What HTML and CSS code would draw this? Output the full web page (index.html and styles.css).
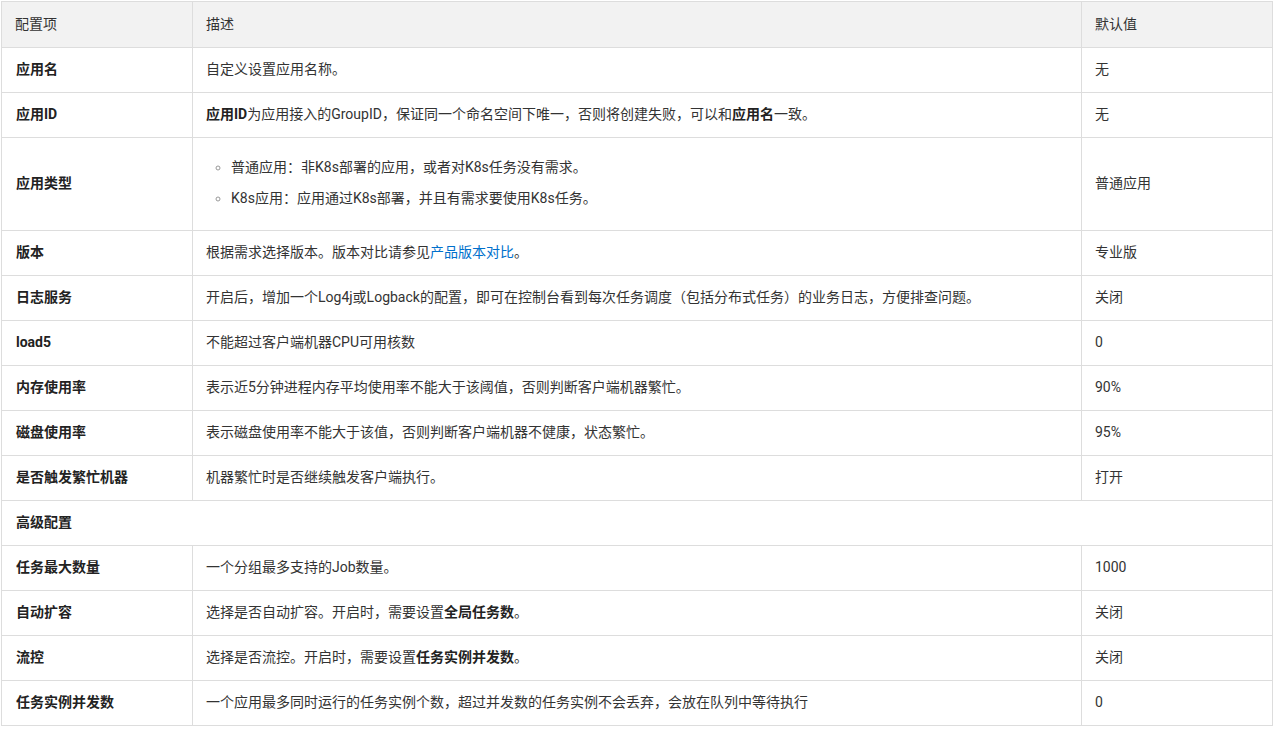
FILE: index.html
```html
<!DOCTYPE html>
<html lang="zh-CN">
<head>
<meta charset="utf-8">
<title>配置项</title>
<link rel="stylesheet" href="styles.css">
</head>
<body>
<table class="cfg">
  <colgroup>
    <col class="c1"><col class="c2"><col class="c3">
  </colgroup>
  <thead>
    <tr><th>配置项</th><th>描述</th><th>默认值</th></tr>
  </thead>
  <tbody>
    <tr><td class="k">应用名</td><td>自定义设置应用名称。</td><td>无</td></tr>
    <tr><td class="k">应用ID</td><td><b>应用ID</b>为应用接入的GroupID，保证同一个命名空间下唯一，否则将创建失败，可以和<b>应用名</b>一致。</td><td>无</td></tr>
    <tr><td class="k">应用类型</td><td><ul class="list"><li>普通应用：非K8s部署的应用，或者对K8s任务没有需求。</li><li>K8s应用：应用通过K8s部署，并且有需求要使用K8s任务。</li></ul></td><td>普通应用</td></tr>
    <tr><td class="k">版本</td><td>根据需求选择版本。版本对比请参见<a class="link" href="#">产品版本对比</a>。</td><td>专业版</td></tr>
    <tr><td class="k">日志服务</td><td>开启后，增加一个Log4j或Logback的配置，即可在控制台看到每次任务调度（包括分布式任务）的业务日志，方便排查问题。</td><td>关闭</td></tr>
    <tr><td class="k">load5</td><td>不能超过客户端机器CPU可用核数</td><td>0</td></tr>
    <tr><td class="k">内存使用率</td><td>表示近5分钟进程内存平均使用率不能大于该阈值，否则判断客户端机器繁忙。</td><td>90%</td></tr>
    <tr><td class="k">磁盘使用率</td><td>表示磁盘使用率不能大于该值，否则判断客户端机器不健康，状态繁忙。</td><td>95%</td></tr>
    <tr><td class="k">是否触发繁忙机器</td><td>机器繁忙时是否继续触发客户端执行。</td><td>打开</td></tr>
    <tr><td class="k" colspan="3">高级配置</td></tr>
    <tr><td class="k">任务最大数量</td><td>一个分组最多支持的Job数量。</td><td>1000</td></tr>
    <tr><td class="k">自动扩容</td><td>选择是否自动扩容。开启时，需要设置<b>全局任务数</b>。</td><td>关闭</td></tr>
    <tr><td class="k">流控</td><td>选择是否流控。开启时，需要设置<b>任务实例并发数</b>。</td><td>关闭</td></tr>
    <tr><td class="k">任务实例并发数</td><td>一个应用最多同时运行的任务实例个数，超过并发数的任务实例不会丢弃，会放在队列中等待执行</td><td>0</td></tr>
  </tbody>
</table>
</body>
</html>
```
FILE: styles.css
```css
html, body {
  margin: 0;
  padding: 0;
  background: #fff;
}
body {
  padding: 1px 0 0 1px;
  font-family: Roboto, "Noto Sans CJK SC", sans-serif;
  font-size: 14px;
  color: #333;
}
.cfg {
  border-collapse: collapse;
  table-layout: fixed;
  width: 1271px;
}
.c1 { width: 191px; }
.c2 { width: 889px; }
.c3 { width: 191px; }
.cfg th, .cfg td {
  border: 1px solid #ddd;
  padding: 11px 13px 13px;
  line-height: 20px;
  text-align: left;
  vertical-align: middle;
}
.cfg th {
  background: #f2f2f2;
  font-weight: 400;
  color: #333;
  padding-top: 12px;
  padding-bottom: 13px;
}
.cfg td.k {
  font-weight: 700;
  color: #222;
  padding-left: 14px;
}
.cfg b {
  font-weight: 700;
  color: #222;
}
.list {
  margin: 8px 0 9px;
  padding-left: 25px;
  list-style: circle;
}
.list li::marker {
  color: #999;
  font-size: 13px;
}
.list li + li {
  margin-top: 11px;
}
.link {
  color: #0070cc;
  text-decoration: none;
}
```
